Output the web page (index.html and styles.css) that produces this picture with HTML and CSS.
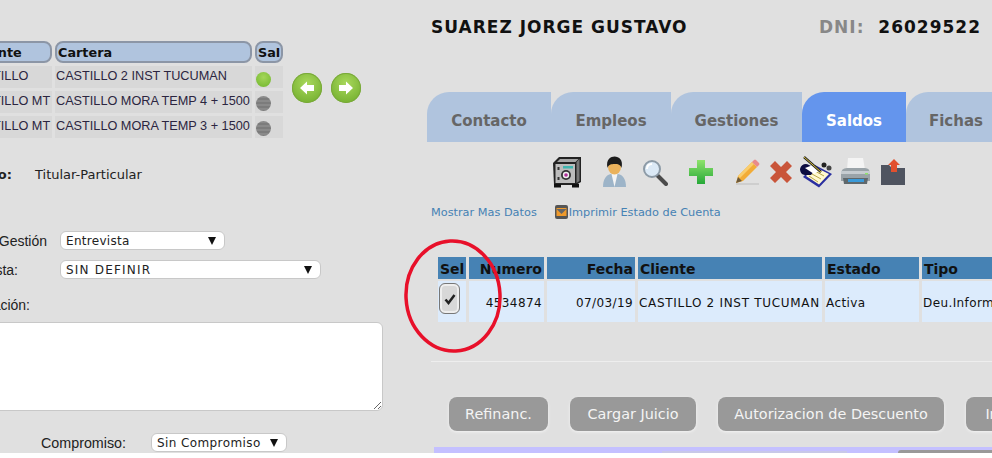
FILE: index.html
```html
<!DOCTYPE html>
<html lang="en">
<head>
    <meta charset="UTF-8">
    <meta name="viewport" content="width=device-width, initial-scale=1.0">
    <title>Saldos</title>
    <link rel="stylesheet" href="styles.css">
</head>
<body>
    <div class="screen">
        <div class="left">
            <div class="cartera-row">
                <div class="cartera">
                    <div class="cartera-head">Cliente</div>
                    <div class="cartera-head">Cartera</div>
                    <div class="cartera-head cartera-sal">Sal</div>

                    <div class="cartera-cell cartera-first">CASTILLO</div>
                    <div class="cartera-cell">CASTILLO 2 INST TUCUMAN</div>
                    <div class="cartera-cell"><span class="dot dot-on"></span></div>

                    <div class="cartera-cell cartera-first">CASTILLO MT</div>
                    <div class="cartera-cell">CASTILLO MORA TEMP 4 + 1500</div>
                    <div class="cartera-cell"><span class="dot"></span></div>

                    <div class="cartera-cell cartera-first">CASTILLO MT</div>
                    <div class="cartera-cell">CASTILLO MORA TEMP 3 + 1500</div>
                    <div class="cartera-cell"><span class="dot"></span></div>
                </div>
                <div class="nav-btn">
                    <svg viewBox="0 0 30 30" width="30" height="30"><path d="M8 15 L15 8.500 V12 H22 V18 H15 V21.500 Z" fill="#fff"/></svg>
                </div>
                <div class="nav-btn">
                    <svg viewBox="0 0 30 30" width="30" height="30"><path d="M22 15 L15 8.500 V12 H8 V18 H15 V21.500 Z" fill="#fff"/></svg>
                </div>
            </div>

            <div class="tipo-row">
                <span class="field-label field-label-tipo"><b>Tipo:</b></span>
                <span class="tipo-value">Titular-Particular</span>
            </div>

            <div class="field field-gestion">
                <label class="field-label field-label-gestion">Tipo Gestión</label>
                <div class="select select-gestion"><span>Entrevista</span><i class="arrow"></i></div>
            </div>
            <div class="field field-respuesta">
                <label class="field-label field-label-respuesta">Respuesta:</label>
                <div class="select select-respuesta"><span>SIN DEFINIR</span><i class="arrow"></i></div>
            </div>

            <div class="field-label field-label-obs">Observación:</div>
            <textarea class="obs"></textarea>

            <div class="field field-compromiso">
                <label class="compromiso-label">Compromiso:</label>
                <div class="select select-compromiso"><span>Sin Compromiso</span><i class="arrow"></i></div>
            </div>
        </div>

        <div class="right">
            <div class="person">
                <span class="person-name">SUAREZ JORGE GUSTAVO</span>
                <span class="person-dni"><em>DNI:</em> 26029522</span>
            </div>

            <div class="tabs">
                <div class="tab tab-contacto">Contacto</div>
                <div class="tab tab-empleos">Empleos</div>
                <div class="tab tab-gestiones">Gestiones</div>
                <div class="tab tab-saldos">Saldos</div>
                <div class="tab tab-fichas">Fichas</div>
            </div>

            <div class="tools">
                <!-- safe -->
                <svg class="tool tool-safe" viewBox="0 0 30 32" width="30" height="32">
                    <path d="M1 7 L7 1 H29 V26 L24 29 H2 Z" fill="#222"/>
                    <path d="M3.500 8 H23 V27 H3.500 Z" fill="#bcbcbc"/>
                    <path d="M24.500 6 L27.500 3 V25 L24.500 27 Z" fill="#777"/>
                    <path d="M8 3 H26.500 L23.500 6 H5 Z" fill="#a5a5a5"/>
                    <rect x="11" y="10" width="10" height="2.500" fill="#3fb6b0"/>
                    <circle cx="14" cy="19" r="5" fill="#333"/>
                    <circle cx="14" cy="19" r="3.200" fill="#f0f0f0"/>
                    <circle cx="14" cy="19" r="1.800" fill="#b0309a"/>
                    <rect x="5.500" y="11" width="2" height="3" fill="#333"/>
                    <rect x="5.500" y="21" width="2" height="3" fill="#333"/>
                    <rect x="2" y="28" width="7" height="3.500" fill="#111"/>
                    <rect x="20" y="28" width="7" height="3.500" fill="#111"/>
                </svg>
                <!-- person -->
                <svg class="tool tool-person" viewBox="0 0 27 32" width="27" height="32">
                    <path d="M2 31 C2 23 5 19 10 18 H17 C22 19 25 23 25 31 Z" fill="#9db4c8"/>
                    <path d="M10.500 18 L13.500 31 L16.500 18 Z" fill="#f4f4f4"/>
                    <ellipse cx="13.500" cy="11" rx="6.500" ry="7.500" fill="#eab25c"/>
                    <path d="M6.500 12 C4.500 3 10 0.500 13.500 0.500 C18 0.500 22.500 4 20.500 12 C19.500 8.500 17 8 13.500 8 C10 8 7.500 8.500 6.500 12 Z" fill="#1c1c1c"/>
                </svg>
                <!-- magnifier -->
                <svg class="tool tool-search" viewBox="0 0 26 28" width="26" height="28">
                    <path d="M15.500 17.500 L24 26" stroke="#4b4b4b" stroke-width="4" stroke-linecap="round"/>
                    <circle cx="10" cy="11" r="8" fill="#dbe9f6" stroke="#8c9aa6" stroke-width="2"/>
                    <path d="M5 11 C5 8 7 6 10 6" fill="none" stroke="#fff" stroke-width="2"/>
                </svg>
                <!-- plus -->
                <svg class="tool tool-add" viewBox="0 0 24 26" width="24" height="26">
                    <defs>
                        <linearGradient id="plus-fill" x1="0" y1="0" x2="0" y2="1">
                            <stop offset="0" stop-color="#8fe36c"/>
                            <stop offset="1" stop-color="#26a838"/>
                        </linearGradient>
                    </defs>
                    <path d="M8 1 H16 V9 H24 V17 H16 V25 H8 V17 H0 V9 H8 Z" fill="url(#plus-fill)"/>
                </svg>
                <!-- pencil -->
                <svg class="tool tool-edit" viewBox="0 0 25 28" width="25" height="28">
                    <path d="M1 26 H24" stroke="#c9c9c9" stroke-width="1.500"/>
                    <path d="M1 25 L3 18 L17 4 L22 9 L8 23 Z" fill="#f2ac37"/>
                    <path d="M3 18 L17 4 L19 6 L5 20 Z" fill="#f9cd6d"/>
                    <path d="M1 25 L3 19 L7 23 Z" fill="#6d5a3c"/>
                    <path d="M17 4 L19 2 Q20 1 21 2 L24 5 Q25 6 24 7 L22 9 Z" fill="#e98a8a"/>
                </svg>
                <!-- delete -->
                <svg class="tool tool-del" viewBox="0 0 22 22" width="22" height="22">
                    <path d="M5 0 L11 6 L17 0 L22 5 L16 11 L22 17 L17 22 L11 16 L5 22 L0 17 L6 11 L0 5 Z" fill="#c9553a"/>
                </svg>
                <!-- notepad -->
                <svg class="tool tool-note" viewBox="0 0 33 32" width="33" height="32">
                    <path d="M3 21 L19 31.500 L32 18 L15 9 Z" fill="#2a2fa0"/>
                    <path d="M6 20 L19 28.500 L29 18 L15 11 Z" fill="#fff8cf"/>
                    <path d="M12 18 L21 23 M15 15 L24 20 M9 20 L18 26" stroke="#b9a84a" stroke-width="1"/>
                    <path d="M0 13 C1 8 6 7 9 9 L16 13 L11 19 L5 19 C2 19 0 16 0 13 Z" fill="#0c0c40"/>
                    <path d="M5 12 L13 9 L20 14 L14 18 Z" fill="#fff"/>
                    <path d="M4 1 L21 16" stroke="#222" stroke-width="2.500"/>
                    <path d="M4 1 L21 16" stroke="#d8bf3a" stroke-width="1"/>
                    <circle cx="24" cy="9" r="2.500" fill="#222"/>
                    <circle cx="29" cy="12" r="2.500" fill="#444"/>
                </svg>
                <!-- printer -->
                <svg class="tool tool-print" viewBox="0 0 31 30" width="31" height="30">
                    <path d="M8 1 H23 L25 13 H7 Z" fill="#f4f4f4"/>
                    <path d="M1 17 Q1 11 7 11 H25 Q30 11 30 17 V24 H1 Z" fill="#9aa3a8"/>
                    <rect x="1" y="14" width="29" height="3" fill="#c6ccd0"/>
                    <path d="M3 21 H28 L27 27 H4 Z" fill="#5f686c"/>
                    <rect x="8" y="22" width="16" height="3" fill="#3a9ad9"/>
                    <rect x="25" y="16" width="3" height="1.500" fill="#8fe36c"/>
                </svg>
                <!-- folder -->
                <svg class="tool tool-folder" viewBox="0 0 26 28" width="26" height="28">
                    <path d="M1 7 H9 L12 10 H25 V27 H1 Z" fill="#4f5460"/>
                    <path d="M14 1 L20 7 H17 V14 H11 V7 H8 Z" fill="#e2502e"/>
                </svg>
            </div>

            <div class="links">
                <a class="link">Mostrar Mas Datos</a>
                <svg class="link-icon" viewBox="0 0 13 14" width="13" height="14">
                    <rect x="0" y="0" width="13" height="14" rx="2" fill="#555"/>
                    <rect x="1.500" y="3" width="10" height="8" fill="#f09a2b"/>
                    <path d="M1.500 4 L6.500 9 L11.500 4" fill="#666"/>
                </svg>
                <a class="link">Imprimir Estado de Cuenta</a>
            </div>

            <div class="deudas">
                <div class="deudas-head">Sel</div>
                <div class="deudas-head num">Numero</div>
                <div class="deudas-head num">Fecha</div>
                <div class="deudas-head">Cliente</div>
                <div class="deudas-head">Estado</div>
                <div class="deudas-head">Tipo</div>

                <div class="deudas-cell deudas-sel">
                    <span class="check">
                        <svg viewBox="0 0 14 14" width="14" height="14"><path d="M2.500 7.500 L5.500 11 L11.500 3" fill="none" stroke="#222" stroke-width="2.500"/></svg>
                    </span>
                </div>
                <div class="deudas-cell num">4534874</div>
                <div class="deudas-cell num">07/03/19</div>
                <div class="deudas-cell deudas-text">CASTILLO 2 INST TUCUMAN</div>
                <div class="deudas-cell">Activa</div>
                <div class="deudas-cell">Deu.Informada</div>
            </div>

            <div class="divider"></div>

            <div class="actions">
                <div class="btn btn-refi">Refinanc.</div>
                <div class="btn btn-juicio">Cargar Juicio</div>
                <div class="btn btn-descuento">Autorizacion de Descuento</div>
                <div class="btn btn-more">Imprimir</div>
            </div>

            <div class="strip">
                <span class="strip-light"></span>
                <span class="strip-dark"></span>
            </div>
        </div>

        <svg class="circle-mark" viewBox="0 0 104 120" width="104" height="120">
            <ellipse cx="51" cy="59" rx="47" ry="55" fill="none" stroke="#e8102a" stroke-width="3.500" transform="rotate(-3 51 59)"/>
        </svg>
    </div>
</body>
</html>
```

FILE: styles.css
```css
body {
    margin: 0;
    background: white;
    font-family: "Liberation Sans", Arial, sans-serif;
    overflow: hidden;
}
.screen {
    position: relative;
    display: flex;
    width: 992px;
    height: 453px;
    background: #e0e0e0;
    overflow: hidden;
}
.left {
    flex: 0 0 424px;
    padding-top: 41px;
    overflow: hidden;
    box-sizing: border-box;
}
.right {
    flex: 0 0 568px;
    overflow: hidden;
}

/* cartera table */
.cartera-row {
    display: flex;
    align-items: center;
    margin-left: -32px;
}
.cartera {
    display: grid;
    grid-template-columns: 84px 197px 28px;
    grid-auto-rows: 22px;
    gap: 3px;
}
.cartera-head {
    background: #b0c4de;
    border: 2px solid #8c96a6;
    border-radius: 8px;
    box-sizing: border-box;
    font: bold 12.8px "DejaVu Sans", sans-serif;
    line-height: 20px;
    padding-left: 1px;
    color: #111;
    white-space: nowrap;
    overflow: hidden;
}
.cartera-cell {
    background: #d8d8d8;
    font-size: 12.7px;
    line-height: 20px;
    padding-left: 1px;
    color: #2b2540;
    white-space: nowrap;
    overflow: hidden;
}
.cartera-first {
    text-indent: -2px;
}
.dot {
    display: block;
    width: 15px;
    height: 15px;
    margin-top: 5px;
    border-radius: 50%;
    background: repeating-linear-gradient(#8a8a8a 0 2px, #7c7c7c 2px 4px);
}
.dot-on {
    margin-top: 6px;
    background: radial-gradient(circle at 50% 35%, #a4d65a, #6fb52c);
}
.nav-btn {
    width: 30px;
    height: 30px;
    margin: 0 0 3px 9px;
    border-radius: 50%;
    background: radial-gradient(circle at 50% 35%, #a9d85c, #6aa827);
    box-shadow: inset 0 0 0 1px #79a83a;
}
.nav-btn svg {
    display: block;
}

/* form fields */
.field-label {
    display: flex;
    justify-content: flex-end;
    flex: 0 0 60px;
    width: 60px;
    box-sizing: border-box;
    font-size: 14px;
    line-height: 18px;
    color: #222;
    white-space: nowrap;
    overflow: hidden;
}
.field-label-tipo {
    flex-basis: 35px;
    width: 35px;
    padding-right: 23px;
    font-family: "DejaVu Sans", sans-serif;
    font-size: 13px;
}
.field-label-gestion {
    padding-right: 13px;
}
.field-label-respuesta {
    padding-right: 42px;
}
.field-label-obs {
    margin-top: 17px;
    padding-right: 30px;
}
.tipo-row {
    display: flex;
    margin-top: 28px;
    line-height: 18px;
}
.tipo-value {
    font: 13px/18px "DejaVu Sans", sans-serif;
    color: #222;
}
.field {
    display: flex;
    align-items: center;
}
.field-gestion {
    margin-top: 47px;
}
.field-respuesta {
    margin-top: 10px;
}
.field-compromiso {
    margin: 22px 0 0 41px;
}
.compromiso-label {
    width: 110px;
    font-size: 14.3px;
    color: #222;
}
.select {
    display: flex;
    align-items: center;
    justify-content: space-between;
    height: 19px;
    box-sizing: border-box;
    padding: 0 8px 0 5px;
    background: white;
    border: 1px solid #c8c8c8;
    border-radius: 6px;
    font: 12px "DejaVu Sans", sans-serif;
    color: #222;
}
.select-gestion {
    width: 165px;
    letter-spacing: 0.3px;
}
.select-respuesta {
    width: 261px;
    letter-spacing: 1.2px;
}
.select-compromiso {
    width: 136px;
    letter-spacing: 0.4px;
}
.arrow {
    width: 0;
    height: 0;
    border-left: 4.5px solid transparent;
    border-right: 4.5px solid transparent;
    border-top: 8px solid #111;
}
.obs {
    display: block;
    width: 390px;
    height: 89px;
    margin: 8px 0 0 -7px;
    padding: 0;
    box-sizing: border-box;
    background: white;
    border: 1px solid #c8c8c8;
    border-radius: 6px;
}

/* person header */
.person {
    display: flex;
    justify-content: space-between;
    height: 20px;
    padding: 17px 11px 0 7px;
    font: bold 17px/20px "DejaVu Sans", sans-serif;
    letter-spacing: 1px;
    color: #111;
}
.person-dni em {
    font-style: normal;
    color: #888;
    margin-right: 7px;
}

/* tabs */
.tabs {
    display: flex;
    height: 50px;
    margin: 55px 0 0 3px;
}
.tab {
    flex: none;
    background: #b0c4de;
    border-radius: 22px 0 0 0;
    font: bold 15px/58px "DejaVu Sans", sans-serif;
    color: #666;
    text-align: center;
}
.tab-contacto { width: 124px; }
.tab-empleos { width: 120px; }
.tab-gestiones { width: 131px; }
.tab-saldos {
    width: 104px;
    background: #6495ed;
    color: white;
}
.tab-fichas { width: 100px; }

/* toolbar */
.tools {
    display: flex;
    align-items: center;
    height: 32px;
    margin-top: 14px;
    padding-left: 128px;
}
.tool {
    flex: none;
    filter: blur(0.4px);
}
.tool-person { margin-left: 19px; }
.tool-search { margin-left: 14px; }
.tool-add { margin-left: 21px; }
.tool-edit { margin-left: 22px; }
.tool-del { margin-left: 10px; }
.tool-note { margin-left: 8px; }
.tool-print { margin-left: 7px; }
.tool-folder { margin-left: 9px; }

.links {
    display: flex;
    align-items: center;
    height: 16px;
    margin-top: 16px;
    padding-left: 7px;
}
.link {
    font: 11.3px "DejaVu Sans", sans-serif;
    color: #4682b4;
    white-space: nowrap;
}
.link-icon {
    margin: 0 1px 0 18px;
}

/* deudas table */
.deudas {
    display: grid;
    grid-template-columns: 28px 75px 88px 184px 94px 120px;
    grid-template-rows: 22px 41px;
    gap: 2px 3px;
    margin: 37px 0 0 14px;
    font-family: "DejaVu Sans", sans-serif;
    white-space: nowrap;
}
.deudas-head {
    background: #4682b4;
    font-size: 14px;
    font-weight: bold;
    line-height: 24px;
    color: #111;
    padding-left: 2px;
    overflow: hidden;
}
.deudas-cell {
    background: #dcebfc;
    font-size: 12px;
    line-height: 45px;
    letter-spacing: 0.4px;
    color: #111;
    padding-left: 1px;
    overflow: hidden;
}
.deudas-text {
    letter-spacing: 0.7px;
}
.num {
    text-align: right;
    padding-right: 2px;
}
.deudas-sel {
    padding: 2px 0 0 1px;
}
.check {
    display: flex;
    align-items: center;
    justify-content: center;
    width: 19px;
    height: 29px;
    border: 1px solid #777;
    border-radius: 6px;
    background: #d8d8d8;
    box-shadow: inset 0 0 0 2px #eee;
}
.check svg {
    display: block;
}

.divider {
    height: 1px;
    margin: 39px 0 0 7px;
    background: #eee;
}

.actions {
    display: flex;
    gap: 22px;
    margin-top: 35px;
    padding-left: 25px;
}
.btn {
    flex: none;
    height: 34px;
    border-radius: 8px;
    background: #999;
    box-shadow: 0 1px 3px #f4f4f4;
    font: 14.4px/35px "DejaVu Sans", sans-serif;
    color: #f4f4f4;
    text-align: center;
    white-space: nowrap;
    overflow: hidden;
}
.btn-refi { width: 99px; }
.btn-juicio { width: 126px; }
.btn-descuento { width: 226px; }
.btn-more { width: 100px; }

.strip {
    display: flex;
    align-items: flex-end;
    height: 6px;
    margin: 16px 0 0 10px;
    padding-left: 228px;
    background: #c4c0ff;
}
.strip-light {
    width: 185px;
    height: 2px;
    background: #c8c8e8;
}
.strip-dark {
    flex: 1;
    height: 3px;
    margin-left: 51px;
    border-radius: 4px 0 0 0;
    background: #999;
}

/* hand drawn red mark over the table */
.circle-mark {
    position: absolute;
    left: 402px;
    top: 237px;
}
```
